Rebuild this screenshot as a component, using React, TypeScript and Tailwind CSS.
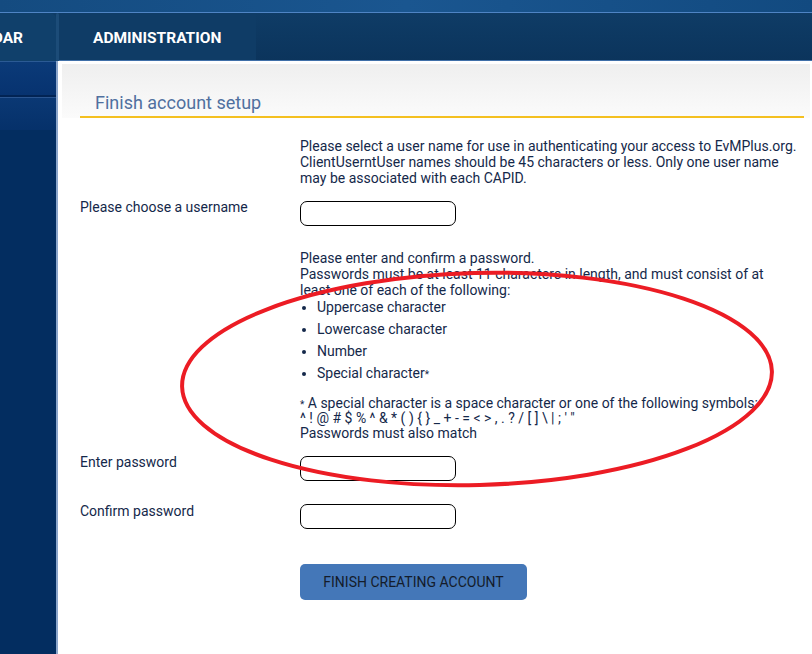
import React from "react";

const font = { fontFamily: "Roboto, 'Liberation Sans', sans-serif" };

function Field({ label }: { label?: string }) {
  return (
    <input
      type="text"
      aria-label={label}
      className="w-[156px] h-[25px] rounded-[7px] border border-black bg-white"
    />
  );
}

function Row({
  label,
  children,
  className = "",
  labelShift = "-mt-[2px]",
}: {
  label?: string;
  children: React.ReactNode;
  className?: string;
  labelShift?: string;
}) {
  return (
    <div className={"flex " + className}>
      <div
        className={
          "w-[220px] shrink-0 text-[14px] leading-[16px] text-[#14284a] " + labelShift
        }
      >
        {label}
      </div>
      <div className="flex-1">{children}</div>
    </div>
  );
}

export default function App() {
  return (
    <div
      className="relative w-[812px] h-[654px] overflow-hidden bg-white"
      style={font}
    >
      {/* top band */}
      <div className="h-[12px] bg-gradient-to-r from-[#144b80] via-[#1a5690] to-[#124a80]" />
      <div className="h-px bg-[#4f84c4]" />

      {/* nav */}
      <div className="flex h-[48px] bg-gradient-to-b from-[#0f3c66] to-[#0b345c]">
        <div className="flex w-[56px] items-center justify-end overflow-hidden rounded-tr-[6px] bg-[#10406b] pr-[33px] pt-[3px]">
          <span className="whitespace-nowrap text-[15.5px] font-bold text-white">
            CALENDAR
          </span>
        </div>
        <div className="w-[3px] rounded-t-[4px] bg-[#1c4c78]" />
        <div className="flex w-[197px] items-center rounded-tl-[6px] bg-[#0f3c66] pl-[34px] pt-[4px] border-b border-[#3f6fa8]">
          <span className="text-[15.5px] font-bold text-white">ADMINISTRATION</span>
        </div>
        <div className="flex-1 border-b border-[#3f6fa8]" />
      </div>

      <div className="flex h-[593px]">
        {/* sidebar */}
        <div className="flex w-[58px] shrink-0 flex-col border-r-[2px] border-[#8ca6cb] bg-[#032d60]">
          <div className="h-px bg-[#2b5a94]" />
          <div className="h-[33px] bg-gradient-to-b from-[#0b3a78] to-[#073370]" />
          <div className="h-[2px] bg-[#022454]" />
          <div className="h-px bg-[#2a5590]" />
          <div className="h-[32px] bg-gradient-to-b from-[#0a3874] to-[#06316a]" />
          <div className="flex-1" />
        </div>

        {/* main */}
        <div className="flex-1 pl-[4px] pt-[3px]">
          <div className="bg-gradient-to-b from-[#efefef] to-[#fbfbfb] pt-[29px] mr-[2px]">
            <div className="ml-[33px] text-[18px] leading-[20px] text-[#50709f]">
              Finish account setup
            </div>
            <div className="ml-[18px] mr-[6px] mt-[3px] h-[2px] bg-[#f4c020]" />
          </div>

          <div className="pl-[18px] pt-[20px]">
            <Row>
              <div className="text-[14px] leading-[16px] text-[#14284a]">
                Please select a user name for use in authenticating your access to EvMPlus.org.
                <br />
                ClientUserntUser names should be 45 characters or less. Only one user name
                <br />
                may be associated with each CAPID.
              </div>
            </Row>

            <Row label="Please choose a username" className="mt-[15px]">
              <Field label="username" />
            </Row>

            <Row className="mt-[24px]">
              <div className="text-[14px] leading-[16px] text-[#14284a]">
                <div>Please enter and confirm a password.</div>
                <div>
                  Passwords must be at least 11 characters in length, and must consist of at
                  <br />
                  least one of each of the following:
                </div>
                <ul className="-mt-[2px] ml-[17px] list-disc leading-[22px] marker:text-[#14284a]">
                  <li>Uppercase character</li>
                  <li>Lowercase character</li>
                  <li>Number</li>
                  <li>
                    Special character<span className="text-[10px] leading-none">*</span>
                  </li>
                </ul>
                <div className="mt-[12px] leading-[15px]">
                  <span className="text-[10px] leading-none">*</span> A special character is a space character or one of the following symbols:
                  <br />
                  ^ ! @ # $ % ^ &amp; * ( ) {"{"} {"}"} _ + - = &lt; &gt; , . ? / [ ] \ | ; ' "
                  <br />
                  Passwords must also match
                </div>
              </div>
            </Row>

            <Row label="Enter password" className="mt-[15px]">
              <Field label="password" />
            </Row>

            <Row label="Confirm password" className="mt-[23px]" labelShift="-mt-[1px]">
              <Field label="confirm password" />
            </Row>

            <Row className="mt-[35px]">
              <button
                type="button"
                className="h-[36px] w-[227px] rounded-[5px] bg-[#4477b8] text-[14px] text-[#141c2a]"
              >
                FINISH CREATING ACCOUNT
              </button>
            </Row>
          </div>
        </div>
      </div>

      {/* red annotation */}
      <svg
        className="pointer-events-none absolute left-0 top-0"
        width="812"
        height="654"
        viewBox="0 0 812 654"
      >
        <ellipse
          cx="477"
          cy="379"
          rx="295"
          ry="106"
          fill="none"
          stroke="#ec1c24"
          strokeWidth="4"
          transform="rotate(-1.5 477 379)"
        />
      </svg>
    </div>
  );
}
